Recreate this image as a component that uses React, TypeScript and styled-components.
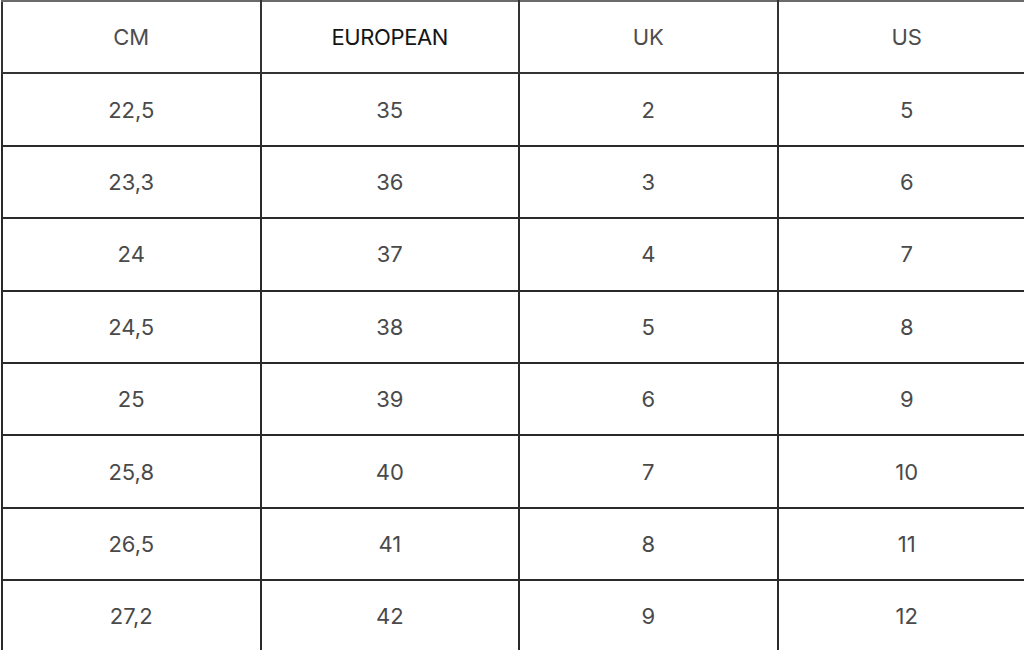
import { createGlobalStyle, styled } from "styled-components";

const GlobalStyle = createGlobalStyle`
  html, body {
    margin: 0;
    padding: 0;
    background: #ffffff;
    overflow: hidden;
  }
`;

const headers = ["CM", "EUROPEAN", "UK", "US"];

const rows = [
  ["22,5", "35", "2", "5"],
  ["23,3", "36", "3", "6"],
  ["24", "37", "4", "7"],
  ["24,5", "38", "5", "8"],
  ["25", "39", "6", "9"],
  ["25,8", "40", "7", "10"],
  ["26,5", "41", "8", "11"],
  ["27,2", "42", "9", "12"],
];

function App() {
  return (
    <>
      <GlobalStyle />
      <Page>
        <SizeTable>
          <thead>
            <tr>
              {headers.map((h) => (
                <HeadCell key={h} $strong={h === "EUROPEAN"}>
                  {h}
                </HeadCell>
              ))}
            </tr>
          </thead>
          <tbody>
            {rows.map((r) => (
              <tr key={r[0]}>
                {r.map((v, i) => (
                  <Cell key={i}>{v}</Cell>
                ))}
              </tr>
            ))}
          </tbody>
        </SizeTable>
      </Page>
    </>
  );
}

const Page = styled.div`
  width: 1024px;
  height: 650px;
  overflow: hidden;
  background: #ffffff;
`;

const SizeTable = styled.table`
  border-collapse: collapse;
  table-layout: fixed;
  width: 1036px;
  margin-left: 1px;
  font-family: Inter, "Liberation Sans", sans-serif;
  font-size: 22px;
  color: #4a4a4a;
  tr {
    height: 72.4px;
  }
`;

const HeadCell = styled.th<{ $strong?: boolean }>`
  padding: 0;
  font-weight: 400;
  text-align: center;
  letter-spacing: ${(p) => (p.$strong ? "-0.4px" : "0")};
  color: ${(p) => (p.$strong ? "#151515" : "#4d4d4d")};
  border: 2px solid #333333;
  border-top-color: #6a6a6a;
`;

const Cell = styled.td`
  padding: 0;
  text-align: center;
  border: 2px solid #2a2a2a;
`;

export default App;
